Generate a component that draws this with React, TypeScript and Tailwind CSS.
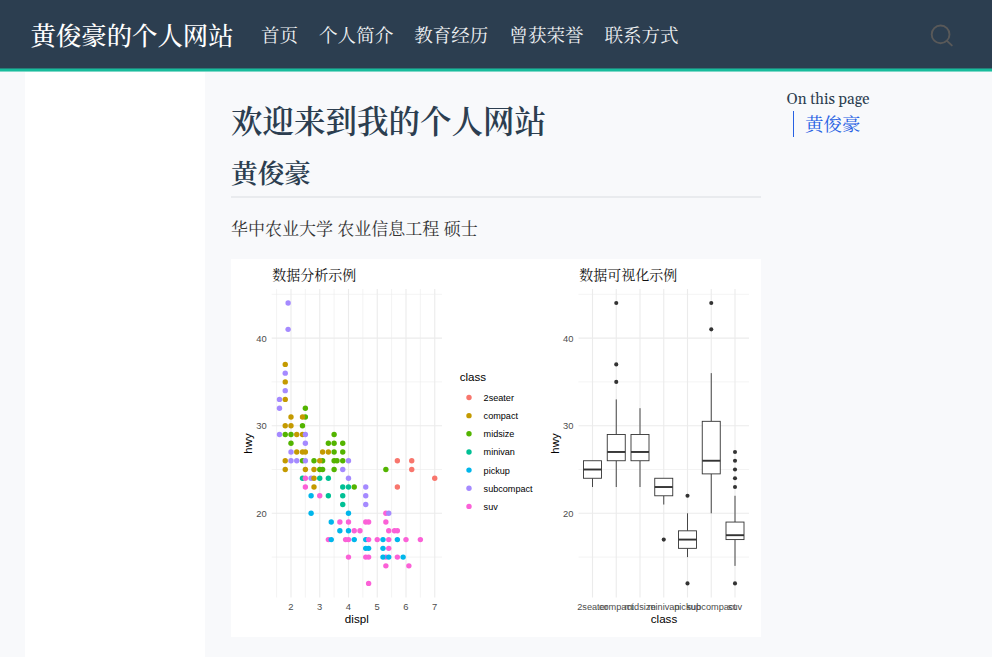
import React from "react";

const serif = "font-['Source_Han_Serif_SC','Noto_Serif_CJK_SC','Noto_Serif_SC',Georgia,serif]";

const COLORS: Record<string, string> = {
  "2seater": "#F8766D",
  compact: "#C49A00",
  midsize: "#53B400",
  minivan: "#00C094",
  pickup: "#00B6EB",
  subcompact: "#A58AFF",
  suv: "#FB61D7",
};

const KEY: Record<string, string> = {
  t: "2seater", c: "compact", m: "midsize", v: "minivan", p: "pickup", s: "subcompact", u: "suv",
};

// Highway mileage followed by class letter + displacement, in paint order.
const ROWS: [number, string][] = [
  [44, "s1.9"], [41, "s1.9"], [37, "c1.8"], [36, "s1.8"], [35, "c1.8"], [34, "s1.8"],
  [33, "s1.6 c1.8"], [32, "s1.6 m2.5"], [31, "c2.0 m2.5 c2.4"], [30, "c1.8 c2.0 m2.4"],
  [29, "s1.6 m1.8 m2.0 c2.2 c2.4 s2.5 m3.5"],
  [28, "m2.0 s2.5 m3.3 m3.5 m3.8"],
  [27, "s2.0 c2.2 c2.4 c2.5 c3.1 c3.3 m3.5 m3.8"],
  [26, "c1.8 s2.0 s2.2 m2.4 s2.5 m2.8 m3.1 c3.0 m3.5 m3.6 m3.8 s4.0 t5.7 t6.2"],
  [25, "c1.8 c2.5 c2.8 m3.0 m3.1 m3.5 s3.8 m5.3 t6.2"],
  [24, "v2.4 u2.5 s2.7 c2.8 v3.0 v3.3 s4.0 t7.0"],
  [23, "u2.5 c2.8 v3.8 v4.0 m4.2 s4.6 t5.7"],
  [22, "p2.7 u3.0 v3.3 v3.8 s4.6"],
  [21, "v3.8 s4.6"],
  [20, "p2.7 p4.0 u5.3 s5.4"],
  [19, "p3.4 u3.7 u4.0 u4.6 u4.7 u5.3"],
  [18, "p3.7 p4.0 u4.2 u4.4 u5.4 u5.6 u5.7"],
  [17, "u3.3 p3.4 u3.9 u4.0 p4.2 p4.6 u4.7 u5.0 p5.2 u5.4 p5.7 u6.0 u6.5"],
  [16, "p4.6 p4.7 p5.2 u5.4"],
  [15, "u4.0 u4.6 u4.7 u5.3 p5.2 p5.4 u5.7 p5.9"],
  [14, "u5.3 u6.1"],
  [12, "u4.7"],
];

const BOXES = [
  { n: "2seater", lo: 23, q1: 24, m: 25, q3: 26, hi: 26, out: [] as number[] },
  { n: "compact", lo: 23, q1: 26, m: 27, q3: 29, hi: 33, out: [35, 37, 44] },
  { n: "midsize", lo: 23, q1: 26, m: 27, q3: 29, hi: 32, out: [] },
  { n: "minivan", lo: 21, q1: 22, m: 23, q3: 24, hi: 24, out: [17] },
  { n: "pickup", lo: 15, q1: 16, m: 17, q3: 18, hi: 20, out: [12, 22] },
  { n: "subcompact", lo: 20, q1: 24.5, m: 26, q3: 30.5, hi: 36, out: [41, 44] },
  { n: "suv", lo: 14, q1: 17, m: 17.5, q3: 19, hi: 22, out: [12, 23, 24, 25, 26, 27] },
];

const px = (d: number) => 291 + (d - 2) * 28.75;
const py = (h: number) => 337.6 + (40 - h) * 8.76;
const bx = (i: number) => 592.5 + i * 23.75;

function Grid({ left, right }: { left: number; right: number }) {
  return (
    <>
      {[45, 40, 35, 30, 25, 20, 15].map((h) => (
        <line key={h} x1={left} x2={right} y1={py(h)} y2={py(h)} stroke="#ebebeb" strokeWidth={h % 10 ? 0.6 : 1.1} />
      ))}
      {[40, 30, 20].map((h) => (
        <text key={h} x={left - 5} y={py(h) + 3.6} textAnchor="end" fontSize="9.4" fill="#4d4d4d">{h}</text>
      ))}
      <text transform={`translate(${left - 20} 443) rotate(-90)`} textAnchor="middle" fontSize="11.4" fill="#000">hwy</text>
    </>
  );
}

function Plot() {
  return (
    <svg viewBox="231 258.5 530 378.5" className="block h-[378.5px] w-full bg-white font-['Liberation_Sans',Arial,sans-serif]">
      {[1.5, 2, 2.5, 3, 3.5, 4, 4.5, 5, 5.5, 6, 6.5, 7].map((d) => (
        <line key={d} x1={px(d)} x2={px(d)} y1="288.5" y2="597" stroke="#ebebeb" strokeWidth={d % 1 ? 0.6 : 1.1} />
      ))}
      <Grid left={271.7} right={442} />
      {ROWS.map(([h, items]) =>
        items.split(" ").map((p) => (
          <circle key={h + p} cx={px(Number(p.slice(1)))} cy={py(h)} r="2.7" fill={COLORS[KEY[p[0]]]} />
        )),
      )}
      {[2, 3, 4, 5, 6, 7].map((d) => (
        <text key={d} x={px(d) - 0.2} y="609.6" textAnchor="middle" fontSize="9.4" fill="#4d4d4d">{d}</text>
      ))}
      <text x="356.8" y="622.5" textAnchor="middle" fontSize="11.6" fill="#000">displ</text>
      <text x="272.3" y="279.4" fontSize="14" fill="#111" className={serif}>数据分析示例</text>

      <text x="459.7" y="380.6" fontSize="11.6" fill="#000">class</text>
      {Object.keys(COLORS).map((k, i) => (
        <g key={k}>
          <circle cx="469" cy={397 + i * 18.15} r="2.7" fill={COLORS[k]} />
          <text x="483.6" y={400.4 + i * 18.15} fontSize="9.1" fill="#000">{k}</text>
        </g>
      ))}

      {BOXES.map((b, i) => (
        <line key={b.n} x1={bx(i)} x2={bx(i)} y1="288.5" y2="597" stroke="#ebebeb" strokeWidth="1.1" />
      ))}
      <Grid left={578.5} right={749} />
      {BOXES.map((b, i) => (
        <g key={b.n} stroke="#333" strokeWidth="0.9">
          <path d={`M${bx(i)} ${py(b.hi)}V${py(b.q3)}M${bx(i)} ${py(b.q1)}V${py(b.lo)}`} />
          <rect x={bx(i) - 9} y={py(b.q3)} width="18" height={py(b.q1) - py(b.q3)} fill="#fff" />
          <path d={`M${bx(i) - 9} ${py(b.m)}h18`} strokeWidth="1.9" />
          {b.out.map((h) => <circle key={h} cx={bx(i)} cy={py(h)} r="2.05" fill="#333" stroke="none" />)}
          <text x={bx(i)} y="609.6" textAnchor="middle" fontSize="9.2" fill="#4d4d4d" stroke="none">{b.n}</text>
        </g>
      ))}
      <text x="664" y="622.5" textAnchor="middle" fontSize="11.6" fill="#000">class</text>
      <text x="579.3" y="279.4" fontSize="14" fill="#111" className={serif}>数据可视化示例</text>
    </svg>
  );
}

export default function App() {
  return (
    <div className={`flex h-[657px] w-[992px] flex-col overflow-hidden bg-[#f8f9fb] text-[#2c3e50] ${serif}`}>
      <header className="shrink-0">
        <div className="flex h-[68px] items-center bg-[#2c3e50] pr-[39px] pl-[30.5px] text-white">
          <span className="w-[230.5px] text-[25.4px] leading-[36px] font-medium whitespace-nowrap">黄俊豪的个人网站</span>
          <nav className="flex gap-[21px] text-[18.55px] leading-7 whitespace-nowrap text-[#f0f2f4]">
            {["首页", "个人简介", "教育经历", "曾获荣誉", "联系方式"].map((t) => <span key={t}>{t}</span>)}
          </nav>
          <svg viewBox="0 0 22 22" className="mt-[3px] ml-auto h-[22px] w-[22px] overflow-visible" fill="none" stroke="#595959" strokeWidth="1.9" strokeLinecap="round">
            <circle cx="9.6" cy="9.4" r="8.9" />
            <path d="M16 15.9l4.8 4.5" />
          </svg>
        </div>
        <div className="h-px bg-[#24807a]" />
        <div className="h-0.5 bg-[#18bc9c]" />
        <div className="h-px bg-[#80d8c8]" />
      </header>
      <div className="flex flex-1 pl-[25px]">
        <aside className="w-[180.4px] shrink-0 bg-white" />
        <main className="ml-[25.6px] w-[530px] shrink-0">
          <h1 className="mt-[24.5px] text-[31.5px] leading-[46px] font-semibold">欢迎来到我的个人网站</h1>
          <h2 className="mt-[10.5px] h-[45px] border-b-2 border-[#e9ebee] text-[26.7px] leading-[38px] font-semibold">黄俊豪</h2>
          <p className="mt-[17px] text-[17px] leading-[26px] text-[#333]">华中农业大学 农业信息工程 硕士</p>
          <div className="mt-[17.5px]"><Plot /></div>
        </main>
        <aside className="ml-[25px] pt-[18px]">
          <div className="pl-[0.5px] font-[Gelasio,Georgia,serif] text-[15px] leading-[20px]">On this page</div>
          <div className="mt-[1px] ml-[7px] h-[26px] border-l border-[#2761e3] pl-[11px] text-[18.5px] leading-[25px] text-[#2761e3]">黄俊豪</div>
        </aside>
      </div>
    </div>
  );
}
